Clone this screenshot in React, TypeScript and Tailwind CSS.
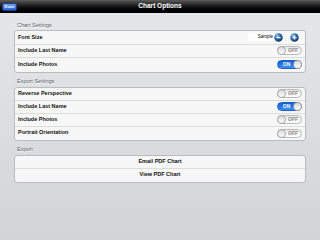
const font = { fontFamily: '"Liberation Sans", Arial, sans-serif' };

type ToggleProps = { on: boolean };

const Toggle = ({ on }: ToggleProps) => {
  if (on) {
    return (
      <div className="flex h-[9px] w-[25px] items-center rounded-full border border-[#1b5fbf] bg-gradient-to-b from-[#0f5fd6] to-[#3f8df2]">
        <span className="flex-1 pl-[2px] text-center text-[5px] font-bold leading-none text-white">ON</span>
        <div className="h-[9px] w-[9px] -mr-px rounded-full border border-[#a7a7a7] bg-gradient-to-b from-[#d7d7d7] to-[#ffffff]" />
      </div>
    );
  }
  return (
    <div className="flex h-[9px] w-[25px] items-center rounded-full border border-[#b9b9b9] bg-gradient-to-b from-[#e9e9e9] to-[#ffffff]">
      <div className="h-[9px] w-[9px] -ml-px rounded-full border border-[#a7a7a7] bg-gradient-to-b from-[#d7d7d7] to-[#ffffff]" />
      <span className="flex-1 pr-[1px] text-center text-[5px] font-bold leading-none text-[#8a8a8a]">OFF</span>
    </div>
  );
};

const RoundButton = ({ plus }: { plus: boolean }) => (
  <svg width="9" height="9" viewBox="0 0 18 18">
    <defs>
      <radialGradient id={plus ? "gp" : "gm"} cx="0.35" cy="0.3" r="0.8">
        <stop offset="0" stopColor="#9fc4ea" />
        <stop offset="0.45" stopColor="#2a6aa8" />
        <stop offset="1" stopColor="#0d2f57" />
      </radialGradient>
    </defs>
    <circle cx="9" cy="9" r="8.5" fill={`url(#${plus ? "gp" : "gm"})`} />
    <rect x="5" y="8" width="8" height="2.4" fill="#ffffff" />
    {plus && <rect x="7.8" y="5" width="2.4" height="8" fill="#ffffff" />}
  </svg>
);

const Row = ({ label, h, children, last }: { label: string; h: string; children?: React.ReactNode; last?: boolean }) => (
  <div className={`flex ${h} items-center justify-between pl-[3px] pr-[3px] ${last ? "" : "border-b border-[#dcdcdc]"}`}>
    <span className="text-[5.5px] font-bold leading-none text-[#111111]">{label}</span>
    {children}
  </div>
);

const SectionLabel = ({ text }: { text: string }) => (
  <div className="flex h-[10px] items-center pl-[3px] text-[5.5px] text-[#5d626b] [text-shadow:0_1px_0_#ffffff]">
    {text}
  </div>
);

const Group = ({ children }: { children: React.ReactNode }) => (
  <div className="overflow-hidden rounded-[3px] border border-[#b9bbbf] bg-[#f7f7f7]">{children}</div>
);

export default function App() {
  return (
    <div className="flex h-[240px] w-[320px] flex-col overflow-hidden" style={font}>
      <div className="grid h-[13px] grid-cols-[1fr_auto_1fr] items-center bg-gradient-to-b from-[#5c5c5c] via-[#161616] to-[#000000] px-[2px]">
        <div className="flex">
          <button className="flex h-[8px] w-[15px] items-center justify-center rounded-[2px] border border-[#1d3f86] bg-gradient-to-b from-[#6d9cf0] to-[#2a5fd6] text-[4px] font-bold leading-none text-white">
            Done
          </button>
        </div>
        <div className="text-[6.5px] font-bold leading-none text-white">Chart Options</div>
        <div />
      </div>

      <div className="flex flex-1 flex-col bg-gradient-to-b from-[#e4e6e9] to-[#d3d4d8] px-[14px]">
        <div className="mt-[7px]">
          <SectionLabel text="Chart Settings" />
        </div>
        <Group>
          <Row label="Font Size" h="h-[13.5px]">
            <div className="flex items-center">
              <div className="flex h-[8px] w-[26px] items-center justify-end bg-white pr-[1px] text-[4.5px] leading-none text-black">
                Sample
              </div>
              <RoundButton plus={false} />
              <div className="w-[7px]" />
              <RoundButton plus={true} />
              <div className="w-[3px]" />
            </div>
          </Row>
          <Row label="Include Last Name" h="h-[13.5px]">
            <Toggle on={false} />
          </Row>
          <Row label="Include Photos" h="h-[13.5px]" last>
            <Toggle on={true} />
          </Row>
        </Group>

        <div className="mt-[4px]">
          <SectionLabel text="Export Settings" />
        </div>
        <Group>
          <Row label="Reverse Perspective" h="h-[13px]">
            <Toggle on={false} />
          </Row>
          <Row label="Include Last Name" h="h-[13px]">
            <Toggle on={true} />
          </Row>
          <Row label="Include Photos" h="h-[13px]">
            <Toggle on={false} />
          </Row>
          <Row label="Portrait Orientation" h="h-[13px]" last>
            <Toggle on={false} />
          </Row>
        </Group>

        <div className="mt-[4px]">
          <SectionLabel text="Export" />
        </div>
        <Group>
          <div className="flex h-[13px] items-center justify-center border-b border-[#dcdcdc] text-[5.5px] font-bold leading-none text-[#111111]">
            Email PDF Chart
          </div>
          <div className="flex h-[13px] items-center justify-center text-[5.5px] font-bold leading-none text-[#111111]">
            View PDF Chart
          </div>
        </Group>
      </div>
    </div>
  );
}
